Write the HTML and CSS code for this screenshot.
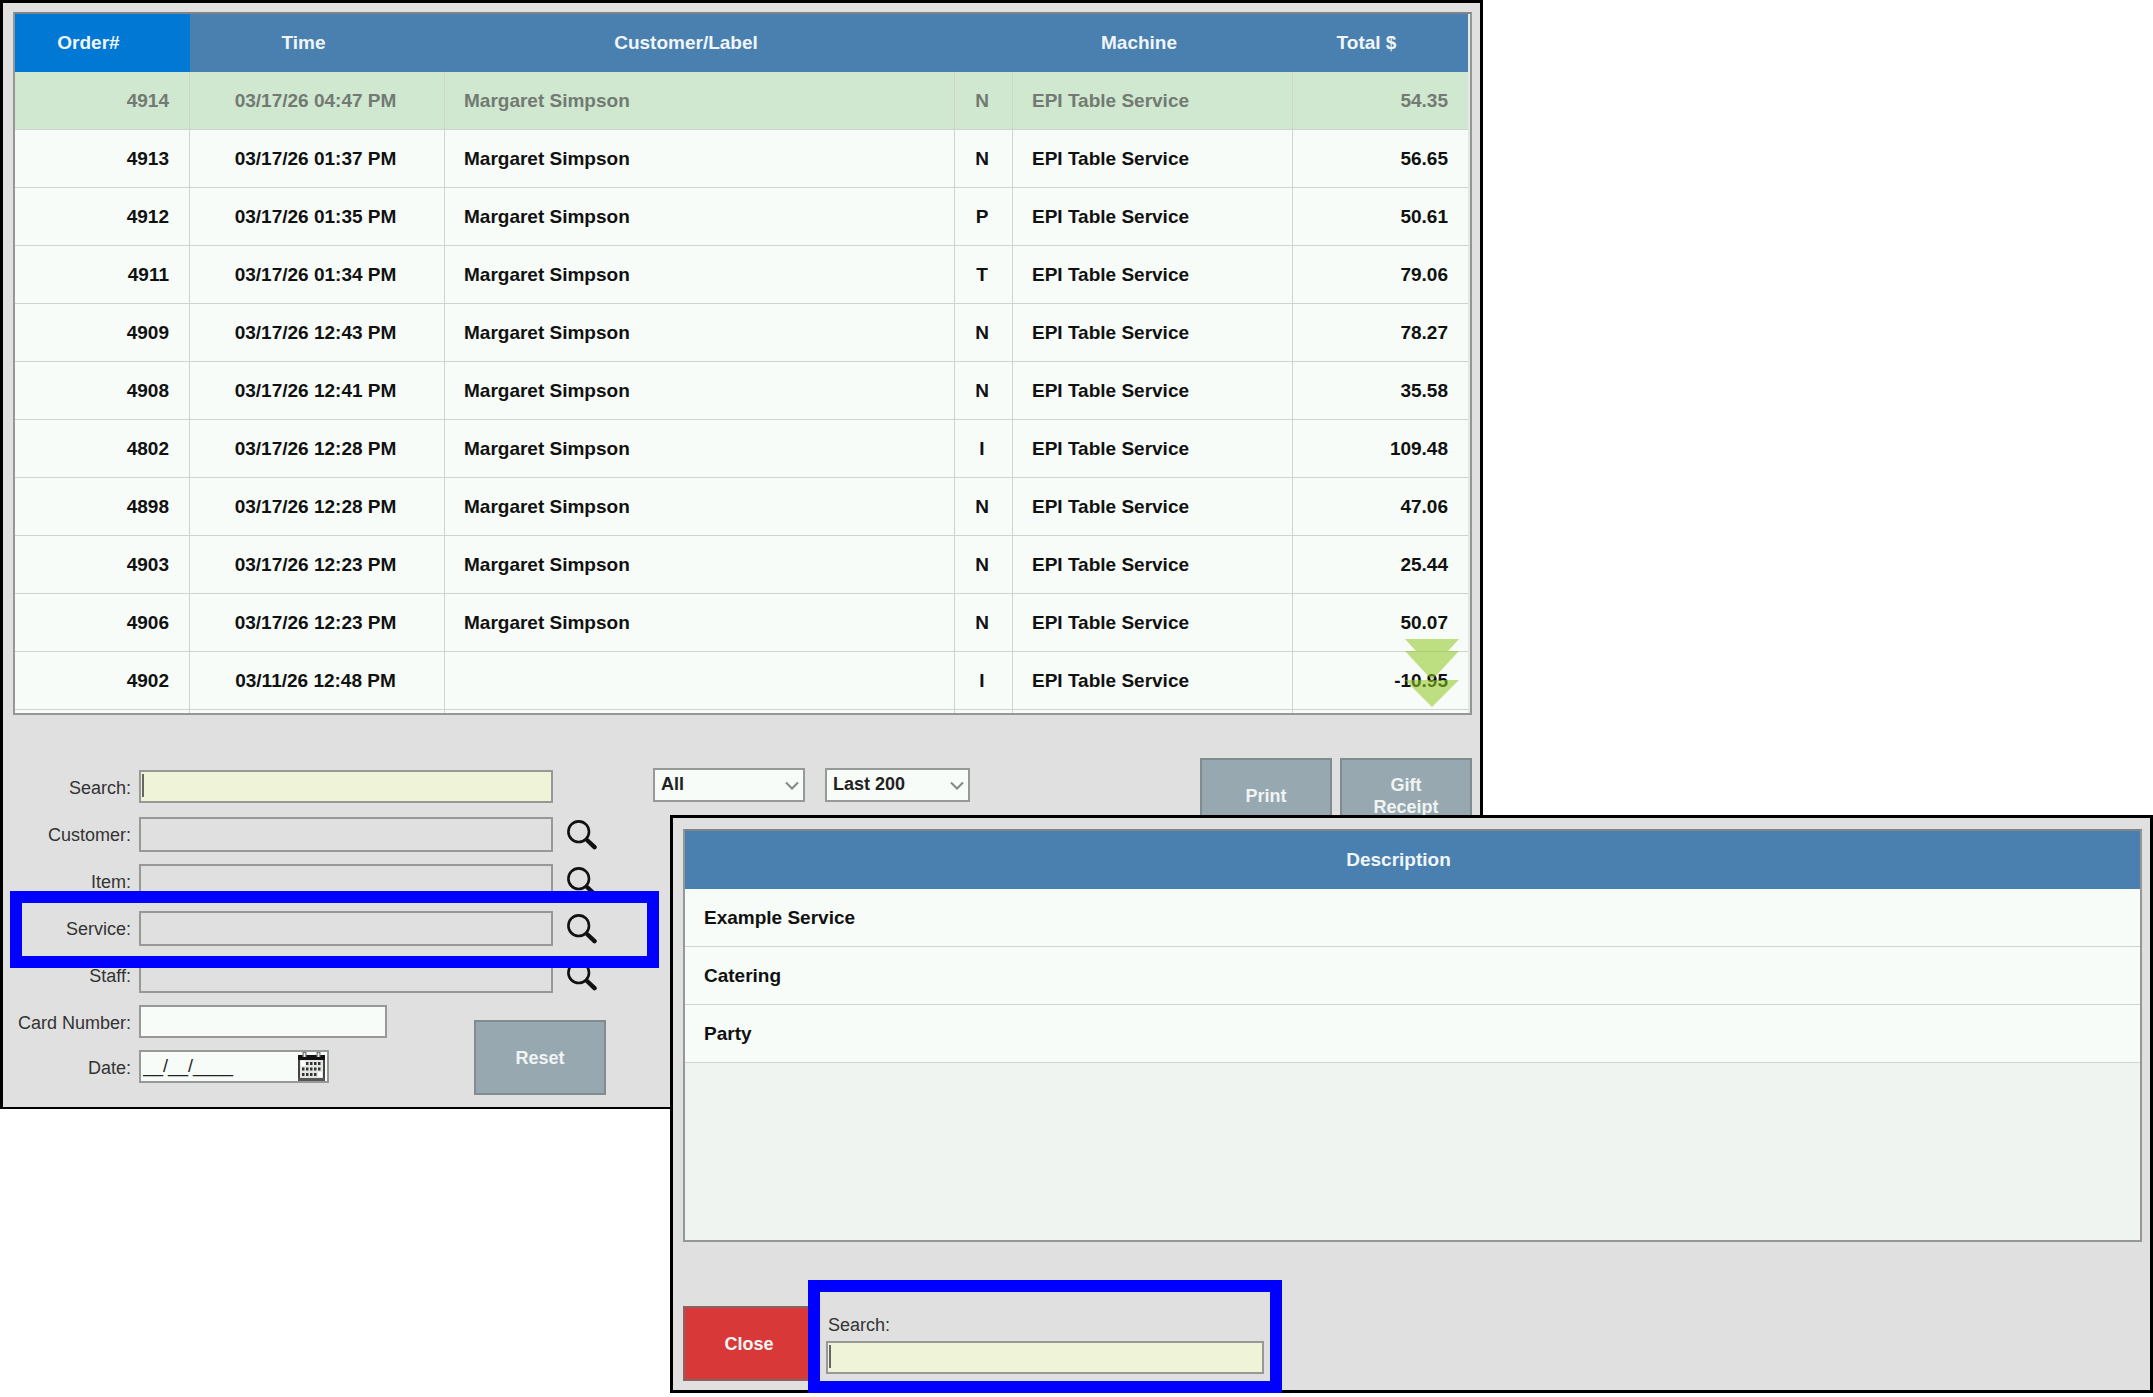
FILE: index.html
```html
<!DOCTYPE html>
<html lang="en">
<head>
  <meta charset="UTF-8">
  <meta name="viewport" content="width=device-width, initial-scale=1.0">
  <title>Orders</title>
  <link rel="stylesheet" href="styles.css">
</head>
<body>

<!-- Shared icons -->
<svg class="sprite" aria-hidden="true">
  <symbol id="icon-search" viewBox="0 0 30 30">
    <circle cx="11.7" cy="11.7" r="10.3" fill="none" stroke="#111" stroke-width="2.6"/>
    <path d="M18.5 18.5 L21 21" stroke="#111" stroke-width="2.6"/>
    <path d="M20.5 20.5 L27.5 27.2" stroke="#111" stroke-width="4.4" stroke-linecap="round"/>
  </symbol>
  <symbol id="icon-chevron" viewBox="0 0 14 10">
    <path d="M1 1.5 L7 7.5 L13 1.5" fill="none" stroke="#858785" stroke-width="2"/>
  </symbol>
</svg>

<!-- Order list window -->
<main class="window orders">
  <div class="grid-frame orders-frame">
    <table class="grid">
      <colgroup>
        <col class="col-order">
        <col class="col-time">
        <col>
        <col class="col-type">
        <col class="col-machine">
        <col class="col-total">
      </colgroup>
      <thead>
        <tr>
          <th class="sorted">Order#</th>
          <th>Time</th>
          <th>Customer/Label</th>
          <th></th>
          <th>Machine</th>
          <th>Total $</th>
        </tr>
      </thead>
      <tbody>
        <tr class="selected"><td class="num">4914</td><td class="mid">03/17/26 04:47 PM</td><td>Margaret Simpson</td><td class="mid">N</td><td>EPI Table Service</td><td class="num">54.35</td></tr>
        <tr><td class="num">4913</td><td class="mid">03/17/26 01:37 PM</td><td>Margaret Simpson</td><td class="mid">N</td><td>EPI Table Service</td><td class="num">56.65</td></tr>
        <tr><td class="num">4912</td><td class="mid">03/17/26 01:35 PM</td><td>Margaret Simpson</td><td class="mid">P</td><td>EPI Table Service</td><td class="num">50.61</td></tr>
        <tr><td class="num">4911</td><td class="mid">03/17/26 01:34 PM</td><td>Margaret Simpson</td><td class="mid">T</td><td>EPI Table Service</td><td class="num">79.06</td></tr>
        <tr><td class="num">4909</td><td class="mid">03/17/26 12:43 PM</td><td>Margaret Simpson</td><td class="mid">N</td><td>EPI Table Service</td><td class="num">78.27</td></tr>
        <tr><td class="num">4908</td><td class="mid">03/17/26 12:41 PM</td><td>Margaret Simpson</td><td class="mid">N</td><td>EPI Table Service</td><td class="num">35.58</td></tr>
        <tr><td class="num">4802</td><td class="mid">03/17/26 12:28 PM</td><td>Margaret Simpson</td><td class="mid">I</td><td>EPI Table Service</td><td class="num">109.48</td></tr>
        <tr><td class="num">4898</td><td class="mid">03/17/26 12:28 PM</td><td>Margaret Simpson</td><td class="mid">N</td><td>EPI Table Service</td><td class="num">47.06</td></tr>
        <tr><td class="num">4903</td><td class="mid">03/17/26 12:23 PM</td><td>Margaret Simpson</td><td class="mid">N</td><td>EPI Table Service</td><td class="num">25.44</td></tr>
        <tr><td class="num">4906</td><td class="mid">03/17/26 12:23 PM</td><td>Margaret Simpson</td><td class="mid">N</td><td>EPI Table Service</td><td class="num">50.07</td></tr>
        <tr><td class="num">4902</td><td class="mid">03/11/26 12:48 PM</td><td></td><td class="mid">I</td><td>EPI Table Service</td><td class="num">-10.95</td></tr>
        <tr><td></td><td></td><td></td><td></td><td></td><td></td></tr>
      </tbody>
    </table>
    <!-- More rows below -->
    <svg class="scroll-hint" viewBox="0 0 54 68" aria-hidden="true">
      <path d="M0 0 H54 L43 12 H54 L27 41 L0 12 H11 Z"/>
      <path d="M0 41 H54 L27 68 Z"/>
    </svg>
  </div>

  <div class="controls">
    <form class="filters">
      <div class="field">
        <label for="search">Search:</label>
        <input id="search" class="text-box wide active" type="text">
      </div>
      <div class="field">
        <label for="customer">Customer:</label>
        <input id="customer" class="text-box wide lookup" type="text" readonly>
        <button class="icon-button" type="button" aria-label="Find customer"><svg class="icon-search"><use href="#icon-search"/></svg></button>
      </div>
      <div class="field">
        <label for="item">Item:</label>
        <input id="item" class="text-box wide lookup" type="text" readonly>
        <button class="icon-button" type="button" aria-label="Find item"><svg class="icon-search"><use href="#icon-search"/></svg></button>
      </div>
      <div class="field service">
        <label for="service">Service:</label>
        <input id="service" class="text-box wide lookup" type="text" readonly>
        <button class="icon-button" type="button" aria-label="Find service"><svg class="icon-search"><use href="#icon-search"/></svg></button>
      </div>
      <div class="field">
        <label for="staff">Staff:</label>
        <input id="staff" class="text-box wide lookup" type="text" readonly>
        <button class="icon-button" type="button" aria-label="Find staff"><svg class="icon-search"><use href="#icon-search"/></svg></button>
      </div>
      <div class="last-fields">
        <div class="field-stack">
          <div class="field">
            <label for="card">Card Number:</label>
            <input id="card" class="text-box card" type="text">
          </div>
          <div class="field">
            <label for="date">Date:</label>
            <div class="text-box date">
              <input id="date" type="text" value="__/__/____">
              <button class="calendar-button" type="button" aria-label="Pick a date">
                <svg class="icon-calendar" viewBox="0 0 27 29" aria-hidden="true">
                  <rect x="1" y="4" width="25" height="24" rx="1" fill="#e4e6e4" stroke="#444" stroke-width="2"/>
                  <rect x="0" y="3" width="27" height="5" fill="#111"/>
                  <rect x="0" y="26" width="27" height="3" fill="#555"/>
                  <path d="M6.5 0 V5 M20.5 0 V5" stroke="#777" stroke-width="4"/>
                  <path d="M6.5 1 V5 M20.5 1 V5" stroke="#eee" stroke-width="1.5"/>
                  <rect x="3" y="9" width="4" height="5" fill="#fff"/>
                  <rect x="20" y="20" width="4" height="5" fill="#fff"/>
                  <path d="M8 11.5 H24 M4 17 H24 M4 22.5 H19.500" stroke="#333" stroke-width="3" stroke-dasharray="2.5 1.5"/>
                </svg>
              </button>
            </div>
          </div>
        </div>
        <button class="action reset" type="button">Reset</button>
      </div>
    </form>

    <div class="selects">
      <div class="select-wrap type">
        <select aria-label="Order type"><option>All</option></select>
        <svg class="icon-chevron"><use href="#icon-chevron"/></svg>
      </div>
      <div class="select-wrap range">
        <select aria-label="Range"><option>Last 200</option></select>
        <svg class="icon-chevron"><use href="#icon-chevron"/></svg>
      </div>
    </div>

    <div class="actions">
      <button class="action" type="button">Print</button>
      <button class="action" type="button">Gift<br>Receipt</button>
    </div>
  </div>
</main>

<!-- Service picker -->
<section class="window picker" role="dialog" aria-label="Services">
  <div class="grid-frame picker-frame">
    <table class="grid">
      <thead>
        <tr><th>Description</th></tr>
      </thead>
      <tbody>
        <tr><td>Example Service</td></tr>
        <tr><td>Catering</td></tr>
        <tr><td>Party</td></tr>
      </tbody>
    </table>
  </div>
  <div class="picker-footer">
    <button class="action close" type="button">Close</button>
    <div class="picker-search">
      <label for="service-search">Search:</label>
      <input id="service-search" class="text-box active" type="text">
    </div>
  </div>
</section>

</body>
</html>
```
FILE: styles.css
```css
* {
  box-sizing: border-box;
}

body {
  margin: 0;
  background: #fff;
  font-family: "Liberation Sans", Arial, sans-serif;
  font-size: 18px;
  color: #333;
}

button,
input,
select {
  font-family: inherit;
  font-size: inherit;
}

.sprite {
  display: none;
}

/* Windows */
.window {
  background: #e0e0e0;
  border: 3px solid #000;
}

.orders {
  margin-right: 670px;
  padding: 9px 8px 12px 10px;
  border-bottom-width: 2px;
}

/* The picker lies over the order list */
.picker {
  position: absolute;
  top: 815px;
  left: 670px;
  right: 0;
  z-index: 2;
  padding: 11px 8px 9px 10px;
}

/* Data grids */
.grid-frame {
  position: relative;
  border: 2px solid #959795;
  border-top-color: #7f8586;
  overflow: hidden;
}

.orders-frame {
  height: 703px;
  padding-right: 2px;
  background: #e4e8e4;
}

.picker-frame {
  min-height: 413px;
  background: #eff4f0;
}

.grid {
  width: 100%;
  table-layout: fixed;
  border-collapse: separate;
  border-spacing: 0;
  font-size: 19px;
  font-weight: bold;
  color: #111;
}

.col-order {
  width: 175px;
}

.col-time {
  width: 255px;
}

.col-type {
  width: 58px;
}

.col-machine {
  width: 280px;
}

.col-total {
  width: 175px;
}

.grid th {
  height: 58px;
  padding: 0 28px 0 0;
  background: #4a80b0;
  color: #f0f5f8;
}

.grid th.sorted {
  background: #0078d4;
}

.grid td {
  height: 58px;
  padding: 0 20px 0 19px;
  background: #f7fcf8;
  border-right: 1px solid #d0d3d0;
  border-bottom: 1px solid #d0d3d0;
}

.grid td:last-child {
  border-right: none;
}

.grid td.num {
  text-align: right;
}

.grid td.mid {
  padding: 0 3px 0 0;
  text-align: center;
}

.grid .selected td {
  background: #cfe8cf;
  color: #737a74;
}

.scroll-hint {
  position: absolute;
  right: 11px;
  bottom: 6px;
  width: 54px;
  height: 68px;
  fill: #90c820;
  opacity: 0.55;
}

/* Filters */
.controls {
  display: flex;
  align-items: flex-start;
  padding-top: 43px;
}

.filters {
  display: flex;
  flex-direction: column;
  gap: 12px;
  width: 593px;
  padding-top: 12px;
}

.field {
  display: flex;
  align-items: flex-start;
  height: 35px;
}

.field label {
  width: 118px;
  margin-right: 8px;
  line-height: 36px;
  text-align: right;
}

.text-box {
  height: 33px;
  padding: 0 2px;
  border: 2px solid #979997;
  border-radius: 0;
  background: #f7fcf8;
}

.text-box.wide {
  width: 414px;
}

.text-box.lookup {
  height: 35px;
  background: #e0e0e0;
}

/* Box being typed in, with its caret */
.text-box.active {
  background: #eff3d8 linear-gradient(#666, #666) 1px 2px / 2px 23px no-repeat;
}

.text-box.card {
  width: 248px;
}

.text-box.date {
  display: flex;
  justify-content: space-between;
  width: 190px;
}

.date input {
  width: 120px;
  padding: 0;
  border: none;
  background: none;
  color: #222;
}

.icon-button,
.calendar-button {
  padding: 0;
  border: none;
  background: none;
}

.icon-button {
  display: flex;
  margin: 3px 0 0 14px;
}

.icon-search {
  width: 30px;
  height: 30px;
}

.calendar-button {
  display: flex;
}

.icon-calendar {
  width: 27px;
  height: 29px;
}

.last-fields {
  display: flex;
  align-items: flex-start;
  justify-content: space-between;
}

.field-stack {
  display: flex;
  flex-direction: column;
  gap: 10px;
}

/* Blue callouts */
.service,
.picker-search {
  position: relative;
}

.service::after,
.picker-search::after {
  content: "";
  position: absolute;
  z-index: 1;
  border: 12px solid #00f;
  pointer-events: none;
}

.service::after {
  top: -20px;
  right: -53px;
  bottom: -22px;
  left: -3px;
}

.picker-search::after {
  top: -26px;
  right: -18px;
  bottom: -19px;
  left: -18px;
}

/* Drop-downs */
.selects {
  display: flex;
  gap: 20px;
  margin: 10px 0 0 47px;
}

.select-wrap {
  position: relative;
}

.select-wrap.type {
  width: 152px;
}

.select-wrap.range {
  width: 145px;
}

.select-wrap select {
  width: 100%;
  height: 34px;
  padding: 0 6px 2px;
  appearance: none;
  border: 2px solid #979997;
  border-radius: 0;
  background: #f7fcf8;
  font-weight: bold;
  color: #222;
}

.icon-chevron {
  position: absolute;
  top: 13px;
  right: 6px;
  width: 14px;
  height: 10px;
  pointer-events: none;
}

/* Buttons */
.actions {
  display: flex;
  gap: 8px;
  margin-left: auto;
}

.action {
  width: 132px;
  height: 75px;
  padding: 0;
  border: 2px solid #818c91;
  background: #98a8b0;
  font-size: 18px;
  font-weight: bold;
  line-height: 22px;
  color: #f0f4f4;
}

.action.reset {
  margin-top: 15px;
}

.action.close {
  border-color: #8a6262;
  background: #d93838;
}

/* Picker footer */
.picker-footer {
  display: flex;
  align-items: flex-start;
  gap: 11px;
  margin-top: 64px;
}

.picker-search {
  display: flex;
  flex-direction: column;
  gap: 4px;
  width: 438px;
  padding-top: 7px;
}

.picker-search label {
  padding-left: 2px;
  line-height: 24px;
}
```
